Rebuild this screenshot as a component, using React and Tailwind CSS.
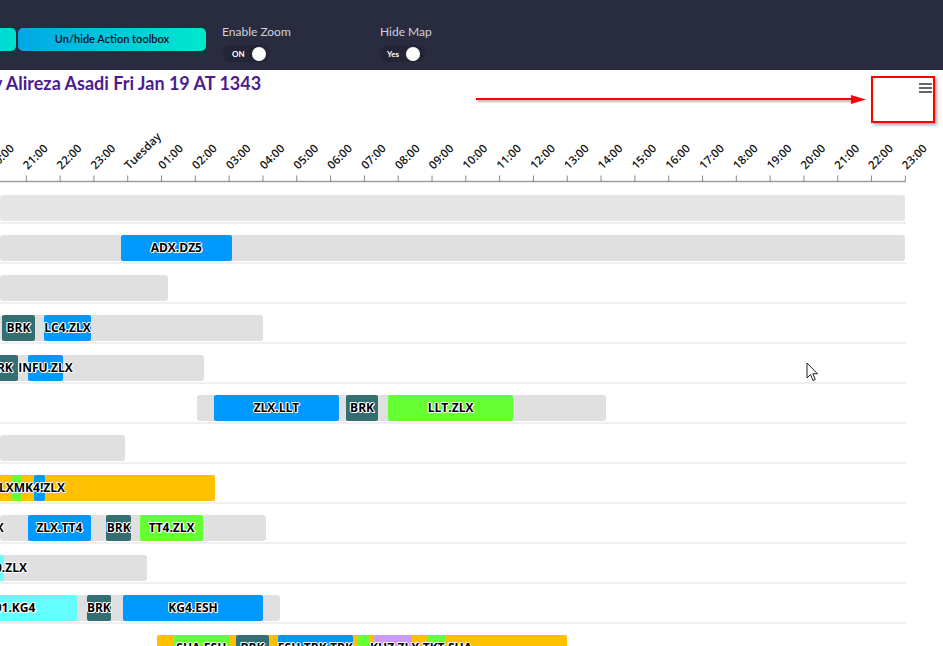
import React from "react";

const TICK0 = 26.3;
const STEP = 33.81;

const hours = [
  "20:00", "21:00", "22:00", "23:00", "Tuesday", "01:00", "02:00", "03:00", "04:00",
  "05:00", "06:00", "07:00", "08:00", "09:00", "10:00", "11:00", "12:00", "13:00",
  "14:00", "15:00", "16:00", "17:00", "18:00", "19:00", "20:00", "21:00", "22:00", "23:00",
];

const tone = {
  gray: "bg-[#e0e0e0] rounded-[3px]",
  light: "bg-[#e6e6e6] rounded-[3px]",
  blue: "bg-[#0099ff] rounded-[2px]",
  teal: "bg-[#336e73] rounded-[2px]",
  green: "bg-[#66ff33] rounded-[2px]",
  orange: "bg-[#ffc000] rounded-[2px]",
  cyan: "bg-[#66ffff] rounded-[2px]",
  purple: "bg-[#cc99ff] rounded-[2px]",
};

// [left, right, tone, label, textLeft]
const rows = [
  [[0, 905, "light"]],
  [[0, 905, "gray"], [120.7, 232, "blue", "ADX.DZ5"]],
  [[0, 167.5, "gray"]],
  [[0, 263, "gray"], [2, 35, "teal", "BRK"], [44, 91, "blue", "LC4.ZLX"]],
  [[0, 204, "gray"], [-16, 17.7, "teal", "BRK"], [27.7, 63.3, "blue", "INFU.ZLX"]],
  [
    [196.7, 606, "gray"],
    [213.7, 339.3, "blue", "ZLX.LLT"],
    [345.7, 378.5, "teal", "BRK"],
    [388, 513.3, "green", "LLT.ZLX"],
  ],
  [[0, 124.7, "gray"]],
  [
    [0, 215, "orange"],
    [-30, 11.3, "orange"],
    [11.7, 22.3, "green"],
    [22.7, 33.7, "orange"],
    [34, 45, "blue"],
    [-40, 105, "none", "LXMK4!ZLX", -1],
  ],
  [
    [0, 266, "gray"],
    [-40, 20, "none", "ZLX", -18],
    [27.7, 91, "blue", "ZLX.TT4"],
    [106.3, 131, "teal", "BRK"],
    [140, 203.3, "green", "TT4.ZLX"],
  ],
  [[0, 147.3, "gray"], [-20, 4, "cyan"], [-40, 60, "none", "0.ZLX", -5]],
  [
    [0, 280, "gray"],
    [-47, 77, "cyan", "01.KG4"],
    [87, 110.7, "teal", "BRK"],
    [123, 263, "blue", "KG4.ESH"],
  ],
  [
    [156.7, 567.3, "orange"],
    [173.7, 229, "green", "SHA.ESH"],
    [236, 269, "teal", "BRK"],
    [278, 352.7, "blue", "ESH.TRK.TRK"],
    [358.3, 368.7, "green"],
    [374, 412.3, "purple"],
    [427.3, 446, "green"],
    [0, 0, "none", "KHZ.ZLX.TKT.SHA", 370],
  ],
];

function Bar({ bar }) {
  const [l, r, t, label, textLeft] = bar;
  const text = (
    <span className="font-['Open_Sans',sans-serif] text-[12px] font-bold text-black whitespace-nowrap [text-shadow:-1px_0_#fff,1px_0_#fff,0_1px_#fff,0_-1px_#fff,1px_1px_#fff,-1px_-1px_#fff]">
      {label}
    </span>
  );
  if (t === "none") {
    return (
      <div className="absolute top-0 h-[26px] flex items-center" style={{ left: textLeft }}>
        {text}
      </div>
    );
  }
  return (
    <div
      className={`absolute top-0 h-[26px] flex items-center justify-center overflow-visible ${tone[t]}`}
      style={{ left: l, width: r - l }}
    >
      {label && text}
    </div>
  );
}

function Axis() {
  return (
    <svg width="943" height="84" className="block">
      <line x1="0" x2="905.5" y1="81.5" y2="81.5" stroke="#9e9e9e" strokeWidth="1.5" />
      {hours.map((h, i) => {
        const x = TICK0 + STEP * (i - 1);
        return (
          <g key={i}>
            <line x1={x} x2={x} y1="75.5" y2="82" stroke="#8a8a8a" strokeWidth="1" />
            <text
              transform={`translate(${x + 1.5} 70) rotate(-45)`}
              fontFamily="'Open Sans', sans-serif"
              fontSize="11.5"
              fontWeight="600"
              fill="#141414"
            >
              {h}
            </text>
          </g>
        );
      })}
    </svg>
  );
}

function Toggle({ label, value, width, pad }) {
  return (
    <div className="flex flex-col items-start">
      <div className="h-[16px] text-[12px] leading-[16px] text-[#d2d3dc] font-['Lato',sans-serif]">{label}</div>
      <div
        className="mt-[5px] h-[17px] rounded-full bg-[#232536] flex items-center"
        style={{ width, paddingLeft: pad }}
      >
        <span className="text-[8px] font-bold text-white font-['Lato',sans-serif] leading-none">{value}</span>
        <span className="ml-[7px] w-[14px] h-[14px] rounded-full bg-white" />
      </div>
    </div>
  );
}

export default function App() {
  return (
    <div className="relative w-[943px] h-[646px] overflow-hidden bg-white">
      <header className="h-[70px] bg-[#292b3e] flex items-start">
        <div className="mt-[28px] flex gap-[2px]">
          <button className="-ml-[100px] w-[116px] h-[23px] rounded-[5px] bg-gradient-to-r from-[#00a9e6] to-[#00e0d2]" />
          <button className="w-[188px] h-[23px] rounded-[5px] bg-gradient-to-r from-[#00a6e6] to-[#00e9cb] text-[11px] text-[#0c0d22] font-['Lato',sans-serif] font-semibold">
            Un/hide Action toolbox
          </button>
        </div>
        <div className="mt-[24px] ml-[16px] w-[158px]">
          <Toggle label="Enable Zoom" value="ON" width={48} pad={10} />
        </div>
        <div className="mt-[24px]">
          <Toggle label="Hide Map" value="Yes" width={45} pad={7} />
        </div>
      </header>

      <div className="h-[30px] pt-[2px] whitespace-nowrap">
        <span className="inline-block -ml-[17px] text-[18px] leading-[20px] font-bold text-[#4b1d8e] font-['Lato',sans-serif]">
          by Alireza Asadi Fri Jan 19 AT 1343
        </span>
      </div>

      <Axis />

      <div className="w-[906px]">
        {rows.map((bars, i) => (
          <div key={i} className="relative h-[40px] border-b-2 border-[#efefef]">
            <div className="absolute left-0 right-0 top-[11px] h-[26px]">
              {bars.map((b, j) => (
                <Bar key={j} bar={b} />
              ))}
            </div>
          </div>
        ))}
      </div>

      {/* annotation arrow */}
      <div className="absolute left-[476px] top-[98px] w-[378px] h-[2px] bg-[#ff0000] shadow-[1px_2px_2px_rgba(0,0,0,0.3)]" />
      <svg className="absolute left-[850px] top-[94px]" width="18" height="12">
        <polygon points="1,1 16,5.5 1,10" fill="#ff0000" />
      </svg>
      <div className="absolute left-[871px] top-[76px] w-[64px] h-[47px] border-2 border-[#ff0000] shadow-[2px_2px_3px_rgba(0,0,0,0.35)]" />
      <div className="absolute left-[919px] top-[83px] w-[13px] flex flex-col gap-[2px]">
        <span className="h-[2px] bg-[#666666]" />
        <span className="h-[2px] bg-[#666666]" />
        <span className="h-[2px] bg-[#666666]" />
      </div>

      {/* mouse pointer */}
      <svg className="absolute left-[806px] top-[362px]" width="14" height="21" viewBox="0 0 14 21">
        <path d="M1 1 L1 16 L4.5 12.5 L7 18.5 L9.3 17.5 L6.8 11.8 L11.5 11.8 Z" fill="#fff" stroke="#222" strokeWidth="1" strokeLinejoin="round" />
      </svg>
    </div>
  );
}
